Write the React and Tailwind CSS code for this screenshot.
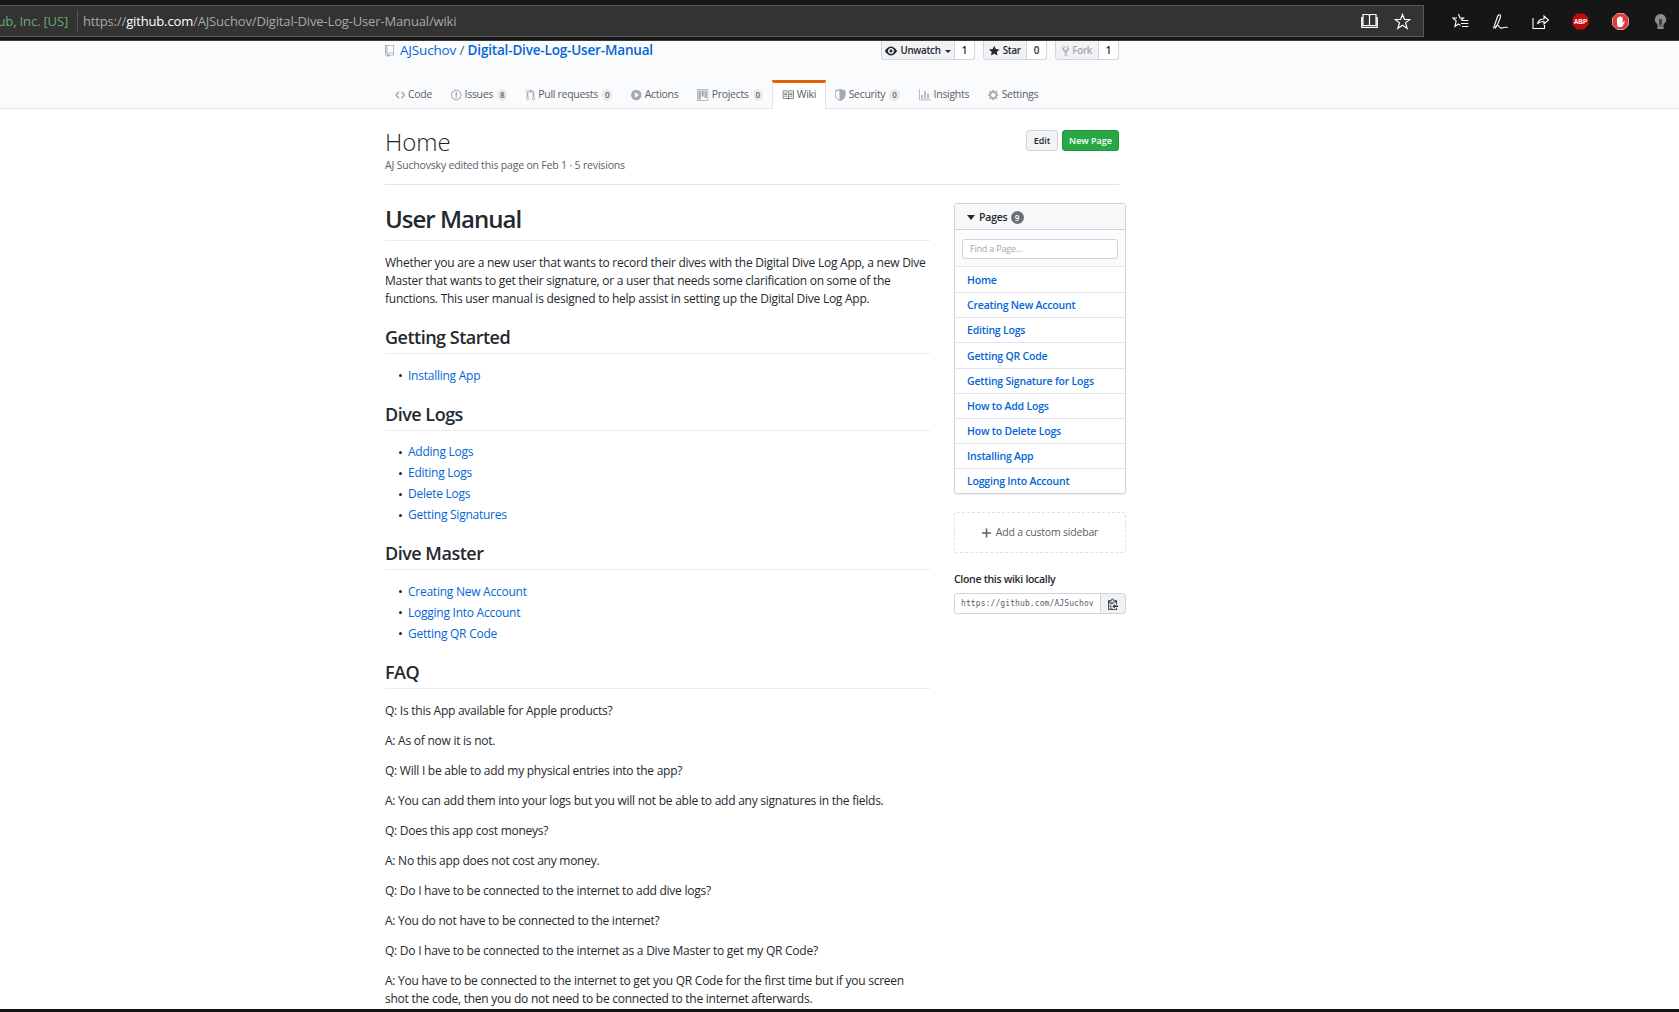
import React from "react";

const OCTICONS = {
  code: { w: 14, d: "M9.5 3L8 4.5 11.5 8 8 11.5 9.5 13 14 8 9.5 3zm-5 0L0 8l4.5 5L6 11.5 2.5 8 6 4.5 4.5 3z" },
  issue: { w: 14, d: "M7 2.3c3.14 0 5.7 2.56 5.7 5.7s-2.56 5.7-5.7 5.7A5.71 5.71 0 0 1 1.3 8c0-3.14 2.56-5.7 5.7-5.7zM7 1C3.14 1 0 4.14 0 8s3.14 7 7 7 7-3.14 7-7-3.14-7-7-7zm1 3H6v5h2V4zm0 6H6v2h2v-2z" },
  pull: { w: 12, d: "M11 11.28V5c-.03-.78-.34-1.47-.94-2.06C9.46 2.35 8.78 2.03 8 2H7V0L4 3l3 3V4h1c.27.02.48.11.69.31.21.2.3.42.31.69v6.28A1.993 1.993 0 0 0 10 15a1.993 1.993 0 0 0 1-3.72zm-1 2.92c-.66 0-1.2-.55-1.2-1.2 0-.65.55-1.2 1.2-1.2.65 0 1.2.55 1.2 1.2 0 .65-.55 1.2-1.2 1.2zM4 3c0-1.11-.89-2-2-2a1.993 1.993 0 0 0-1 3.72v6.56A1.993 1.993 0 0 0 2 15a1.993 1.993 0 0 0 1-3.72V4.72c.59-.34 1-.98 1-1.72zm-.8 10c0 .66-.55 1.2-1.2 1.2-.65 0-1.2-.55-1.2-1.2 0-.65.55-1.2 1.2-1.2.65 0 1.2.55 1.2 1.2zM2 4.2C1.34 4.2.8 3.65.8 3c0-.65.55-1.2 1.2-1.2.65 0 1.2.55 1.2 1.2 0 .65-.55 1.2-1.2 1.2z" },
  play: { w: 14, d: "M14 8A7 7 0 1 1 0 8a7 7 0 0 1 14 0zm-8.223 3.482l4.599-3.066a.5.5 0 0 0 0-.832L5.777 4.518A.5.5 0 0 0 5 4.934v6.132a.5.5 0 0 0 .777.416z" },
  project: { w: 15, d: "M10 12h3V2h-3v10zm-4-2h3V2H6v8zm-4 4h3V2H2v12zm-1 1h13V1H1v14zM14 0H1a1 1 0 0 0-1 1v14a1 1 0 0 0 1 1h13a1 1 0 0 0 1-1V1a1 1 0 0 0-1-1z" },
  book: { w: 16, d: "M3 5h4v1H3V5zm0 3h4V7H3v1zm0 2h4V9H3v1zm11-5h-4v1h4V5zm0 2h-4v1h4V7zm0 2h-4v1h4V9zm2-6v9c0 .55-.45 1-1 1H9.5l-1 1-1-1H2c-.55 0-1-.45-1-1V3c0-.55.45-1 1-1h5.5l1 1 1-1H15c.55 0 1 .45 1 1zm-8 .5L7.5 3H2v9h6V3.5zm7-.5H9.5l-.5.5V12h6V3z" },
  shield: { w: 14, d: "M7 0L0 2v6.02C0 12.69 5.31 16 7 16c1.69 0 7-3.31 7-7.98V2L7 0zm-1 2L1 3.4v4.6c0 3.4 3 5.7 5 6.6V2z" },
  graph: { w: 16, d: "M16 14v1H0V0h1v14h15zM5 13H3V8h2v5zm4 0H7V3h2v10zm4 0h-2V6h2v7z" },
  gear: { w: 14, d: "M14 8.77v-1.6l-1.94-.64-.45-1.09.88-1.84-1.13-1.13-1.81.91-1.09-.45-.69-1.92h-1.6l-.63 1.94-1.11.45-1.84-.88-1.13 1.13.91 1.81-.45 1.09L0 7.23v1.59l1.94.64.45 1.09-.88 1.84 1.13 1.13 1.81-.91 1.09.45.69 1.92h1.59l.63-1.94 1.11-.45 1.84.88 1.13-1.13-.92-1.81.47-1.09L14 8.75v.02zM7 11c-1.66 0-3-1.34-3-3s1.34-3 3-3 3 1.34 3 3-1.34 3-3 3z" },
  repo: { w: 12, d: "M4 9H3V8h1v1zm0-3H3v1h1V6zm0-2H3v1h1V4zm0-2H3v1h1V2zm8-1v12c0 .55-.45 1-1 1H6v2l-1.5-1.5L3 16v-2H1c-.55 0-1-.45-1-1V1c0-.55.45-1 1-1h10c.55 0 1 .45 1 1zm-1 10H1v2h2v-1h3v1h5v-2zm0-10H2v9h9V1z" },
  eye: { w: 16, d: "M8.06 2C3 2 0 8 0 8s3 6 8.06 6C13 14 16 8 16 8s-3-6-7.94-6zM8 12c-2.2 0-4-1.78-4-4 0-2.2 1.8-4 4-4 2.22 0 4 1.8 4 4 0 2.22-1.78 4-4 4zm2-4c0 1.11-.89 2-2 2-1.11 0-2-.89-2-2 0-1.11.89-2 2-2 1.11 0 2 .89 2 2z" },
  star: { w: 14, d: "M14 6l-4.9-.64L7 1 4.9 5.36 0 6l3.6 3.26L2.67 14 7 11.67 11.33 14l-.93-4.74L14 6z" },
  fork: { w: 10, d: "M8 1a1.993 1.993 0 0 0-1 3.72V6L5 8 3 6V4.72A1.993 1.993 0 0 0 2 1a1.993 1.993 0 0 0-1 3.72V6.5l3 3v1.78A1.993 1.993 0 0 0 5 15a1.993 1.993 0 0 0 1-3.72V9.5l3-3V4.72A1.993 1.993 0 0 0 8 1zM2 4.2C1.34 4.2.8 3.65.8 3c0-.65.55-1.2 1.2-1.2.65 0 1.2.55 1.2 1.2 0 .65-.55 1.2-1.2 1.2zm3 10c-.66 0-1.2-.55-1.2-1.2 0-.65.55-1.2 1.2-1.2.65 0 1.2.55 1.2 1.2 0 .65-.55 1.2-1.2 1.2zm3-10c-.66 0-1.2-.55-1.2-1.2 0-.65.55-1.2 1.2-1.2.65 0 1.2.55 1.2 1.2 0 .65-.55 1.2-1.2 1.2z" },
  clippy: { w: 14, d: "M2 13h4v1H2v-1zm5-6H2v1h5V7zm2 3V8l-3 3 3 3v-2h5v-2H9zM4.5 9H2v1h2.5V9zM2 12h2.5v-1H2v1zm9 1h1v2c-.02.28-.11.52-.3.7-.19.18-.42.28-.7.3H1c-.55 0-1-.45-1-1V4c0-.55.45-1 1-1h3c0-1.11.89-2 2-2 1.11 0 2 .89 2 2h3c.55 0 1 .45 1 1v5h-1V6H1v9h10v-2zM2 5h8c0-.55-.45-1-1-1H8c-.55 0-1-.45-1-1s-.45-1-1-1-1 .45-1 1-.45 1-1 1H3c-.55 0-1 .45-1 1z" },
  plus: { w: 12, d: "M12 9H7v5H5V9H0V7h5V2h2v5h5v2z" },
};

function Octicon({ name, size = 12, className = "" }) {
  const icon = OCTICONS[name];
  return (
    <svg
      viewBox={`0 0 ${icon.w} 16`}
      height={size}
      width={(size * icon.w) / 16}
      fill="currentColor"
      className={`shrink-0 ${className}`}
    >
      <path fillRule="evenodd" d={icon.d} />
    </svg>
  );
}

const TABS = [
  { label: "Code", icon: "code" },
  { label: "Issues", icon: "issue", count: 8 },
  { label: "Pull requests", icon: "pull", count: 0 },
  { label: "Actions", icon: "play" },
  { label: "Projects", icon: "project", count: 0 },
  { label: "Wiki", icon: "book", active: true },
  { label: "Security", icon: "shield", count: 0 },
  { label: "Insights", icon: "graph" },
  { label: "Settings", icon: "gear" },
];

const PAGES = [
  "Home",
  "Creating New Account",
  "Editing Logs",
  "Getting QR Code",
  "Getting Signature for Logs",
  "How to Add Logs",
  "How to Delete Logs",
  "Installing App",
  "Logging Into Account",
];

const FAQ = [
  "Q: Is this App available for Apple products?",
  "A: As of now it is not.",
  "Q: Will I be able to add my physical entries into the app?",
  "A: You can add them into your logs but you will not be able to add any signatures in the fields.",
  "Q: Does this app cost moneys?",
  "A: No this app does not cost any money.",
  "Q: Do I have to be connected to the internet to add dive logs?",
  "A: You do not have to be connected to the internet?",
  "Q: Do I have to be connected to the internet as a Dive Master to get my QR Code?",
  "A: You have to be connected to the internet to get you QR Code for the first time but if you screen shot the code, then you do not need to be connected to the internet afterwards.",
];

function BrowserBar() {
  return (
    <div className="h-[41px] shrink-0 bg-[#161616] border-b border-[#3a3a3a] pt-[5px] flex">
      <div className="w-[1424px] h-[32px] bg-[#333333] border-y border-r border-[#5a5a5a] flex items-center text-[13px] tracking-[-0.15px]">
        <div className="w-[77px] shrink-0 flex justify-end overflow-hidden pr-[9px] pt-[2px] whitespace-nowrap text-[#6cab6c]">
          GitHub, Inc. [US]
        </div>
        <div className="w-px h-[22px] bg-[#555555]" />
        <div className="pl-[5px] pt-[2px] text-[#a8a8a8] whitespace-nowrap">
          https://<span className="text-white">github.com</span>/AJSuchov/Digital-Dive-Log-User-Manual/wiki
        </div>
        <div className="ml-auto flex items-center gap-[16px] pr-[12px] text-white">
          <svg width="17" height="16" viewBox="0 0 17 16" fill="none" stroke="currentColor" strokeWidth="1.2">
            <path d="M2 1.500h5.500l1 1 1-1H15v11H2zM8.500 2.500v10M.7 4v10.300h15.600V4" />
          </svg>
          <svg width="17" height="17" viewBox="0 0 17 17" fill="none" stroke="currentColor" strokeWidth="1.2">
            <path d="M8.500 1.500l2 5h5.300l-4.300 3.400 1.600 5.500-4.600-3.200-4.600 3.200 1.600-5.500L1.200 6.500h5.300z" />
          </svg>
        </div>
      </div>
      <div className="flex-1 flex items-center gap-[23px] pl-[28px] pb-[2px] text-white">
        <svg width="17" height="17" viewBox="0 0 17 17" fill="none" stroke="currentColor" strokeWidth="1.1">
          <path d="M6.500 1l1.500 4h3.500l-2.800 2.300M5 5H.7l3.500 3-1.300 5.500 3.600-2.500 2 1.400" />
          <path d="M10 7.500h6.300M9 10.500h7.300M10 13.500h6.300" />
        </svg>
        <svg width="17" height="17" viewBox="0 0 17 17" fill="none" stroke="currentColor" strokeWidth="1.1">
          <path d="M1.500 15.500l4-12C6 2 8 1 8.500 2.500c.5 1-.8 3.500-1.800 6C6 10.500 4.500 13.500 3.500 15M3 15.500c1-3 2.500-4 3.500-2.500.8 1.300 1.500 2.500 3.300 2 1.700-.5 3-1.200 6-.5" />
        </svg>
        <svg width="17" height="17" viewBox="0 0 17 17" fill="none" stroke="currentColor" strokeWidth="1.1">
          <path d="M1 5v10.500h11.500v-3.500M5.500 11c.5-3 3-5 6.500-5V3l4.500 4-4.500 4V8.500C9.500 8.500 7 9 5.500 11z" />
        </svg>
        <svg width="17" height="17" viewBox="0 0 17 17">
          <path d="M5 .5h7L16.500 5v7L12 16.500H5L.5 12V5z" fill="#c40b0b" />
          <text x="8.500" y="11" textAnchor="middle" fontSize="6.500" fontWeight="700" fontFamily="Liberation Sans, sans-serif" fill="#ffffff">ABP</text>
        </svg>
        <svg width="17" height="17" viewBox="0 0 17 17">
          <path d="M5 .5h7L16.500 5v7L12 16.500H5L.5 12V5z" fill="#e23b3b" stroke="#f5b5b5" strokeWidth=".8" />
          <path d="M5 8V5.500c0-1 1.300-1 1.300 0V4.300c0-1 1.400-1 1.400 0V4c0-1 1.500-1 1.500 0v.8c0-1 1.400-1 1.400 0V10l1-1.300c.6-.8 1.600 0 1 .8L10 14H7c-1.500 0-2-1.500-2-3z" fill="#ffffff" />
        </svg>
        <svg width="13" height="17" viewBox="0 0 14 17" fill="#8a8a8a" className="ml-[2px]">
          <path d="M7 .5a6 6 0 0 0-3.500 10.900V13h7v-1.600A6 6 0 0 0 7 .5z" />
          <rect x="3.500" y="13.500" width="7" height="3" rx="1" />
          <rect x="5.500" y="6" width="3" height="6" fill="#3a3a3a" />
        </svg>
      </div>
    </div>
  );
}

function SocialButton({ icon, label, count, caret, muted, width }) {
  return (
    <div className="flex h-[19px] text-[9.750px] font-semibold tracking-[-0.25px]">
      <div className={`${width} h-full pt-[2px] flex items-center justify-center gap-[3px] bg-[#f0f2f5] border border-t-0 border-[#d3d5d8] rounded-bl-[3px] ${muted ? "text-[#a3a7ab]" : "text-[#24292e]"}`}>
        <Octicon name={icon} size={12} />
        {label}
        {caret && <span className="ml-[1px] border-x-[3px] border-x-transparent border-t-[3px] border-t-[#24292e]" />}
      </div>
      <div className="h-full pt-[2px] flex items-center justify-center bg-white border border-l-0 border-t-0 border-[#d3d5d8] rounded-br-[3px] w-[20px] text-[#24292e]">
        {count}
      </div>
    </div>
  );
}

function Tab({ tab }) {
  const base = "h-[29px] flex items-center gap-[3px] px-[8.500px] border-x text-[#586069] -mb-px";
  return (
    <div
      className={
        tab.active
          ? `${base} bg-white border-[#e1e4e8] border-t-[3px] border-t-[#e36209] text-[#24292e] pb-[3px]`
          : `${base} border-transparent`
      }
    >
      <Octicon name={tab.icon} size={12} className={tab.active ? "text-[#586069]" : "text-[#a3aab1]"} />
      <span>{tab.label}</span>
      {tab.count !== undefined && (
        <span className="ml-[1px] px-[3px] h-[12px] flex items-center rounded-full bg-[#e9ebed] text-[8px] font-semibold">
          {tab.count}
        </span>
      )}
    </div>
  );
}

function H2({ children, className = "mb-[12.500px]" }) {
  return (
    <h2 className={`mt-[18px] pb-[5px] border-b border-[#eaecef] text-[18px] leading-[22px] font-semibold tracking-[-0.5px] text-[#24292e] ${className}`}>
      {children}
    </h2>
  );
}

function LinkList({ items }) {
  return (
    <ul className="pl-[14px] mb-[12px]">
      {items.map((item, i) => (
        <li key={item} className={`flex items-center gap-[6px] ${i > 0 ? "mt-[3px]" : ""}`}>
          <span className="w-[3px] h-[3px] rounded-full bg-[#24292e]" />
          <a className="text-[#0366d6]">{item}</a>
        </li>
      ))}
    </ul>
  );
}

function Sidebar() {
  return (
    <aside className="w-[172px] shrink-0 -mr-[7px] tracking-[-0.2px]">
      <div className="border border-[#d1d5da] rounded-[3px] shadow-[0_1px_1px_rgba(0,0,0,0.08)] bg-white">
        <div className="h-[26px] pt-[2px] bg-[#f6f8fa] border-b border-[#d1d5da] flex items-center pl-[12px] text-[10.500px] font-semibold text-[#24292e]">
          <span className="mr-[4px] border-x-[4px] border-x-transparent border-t-[5px] border-t-[#24292e]" />
          Pages
          <span className="ml-[3px] w-[13px] h-[13px] rounded-full bg-[#6a737d] text-white text-[8px] flex items-center justify-center">9</span>
        </div>
        <div className="h-[37px] pt-px bg-[#fafbfc] border-b border-[#e1e4e8] flex items-center px-[7px]">
          <div className="w-full h-[20px] bg-white border border-[#d1d5da] rounded-[3px] flex items-center pl-[7px] text-[9px] text-[#a3a7ab]">
            Find a Page…
          </div>
        </div>
        {PAGES.map((page, i) => (
          <div
            key={page}
            className={`h-[25.150px] pt-[2px] flex items-center pl-[12px] text-[10.500px] font-semibold text-[#0366d6] ${i > 0 ? "border-t border-[#e1e4e8]" : ""}`}
          >
            {page}
          </div>
        ))}
      </div>
      <div className="mt-[18px] h-[41px] border border-dashed border-[#dfe2e5] rounded-[3px] flex items-center justify-center gap-[5px] text-[10.500px] text-[#586069]">
        <Octicon name="plus" size={12} className="text-[#586069]" />
        Add a custom sidebar
      </div>
      <div className="mt-[19px] text-[10.500px] font-semibold tracking-[-0.3px] leading-[14px] text-[#24292e]">Clone this wiki locally</div>
      <div className="mt-[7px] flex h-[21px]">
        <input
          readOnly
          value="https://github.com/AJSuchov/Digital-Dive-Log-User-Manual.wiki.git"
          className="flex-1 min-w-0 border border-[#d1d5da] rounded-l-[3px] px-[6px] font-['DejaVu_Sans_Mono',monospace] text-[8px] tracking-[0.1px] text-[#586069]"
        />
        <div className="w-[26px] -ml-px bg-[#f0f2f5] border border-[#d1d5da] rounded-r-[3px] flex items-center justify-center text-[#24292e]">
          <Octicon name="clippy" size={12} />
        </div>
      </div>
    </aside>
  );
}

export default function App() {
  return (
    <div className="h-[1012px] overflow-hidden flex flex-col bg-white font-['Open_Sans',sans-serif] text-[#24292e]">
      <BrowserBar />
      <div className="flex-1 min-h-0 overflow-hidden">
        <div className="h-[68px] bg-[#fafbfc] border-b border-[#e1e4e8]">
          <div className="w-[734px] ml-[385px] h-full flex flex-col">
            <div className="flex h-[19px]">
              <div className="flex items-center gap-[6px] text-[13.500px] tracking-[-0.17px] text-[#0366d6]">
                <Octicon name="repo" size={12} className="text-[#a3aab1]" />
                <span>
                  AJSuchov <span className="text-[#586069]">/</span> <span className="font-semibold">Digital-Dive-Log-User-Manual</span>
                </span>
              </div>
              <div className="ml-auto flex gap-[8px]">
                <SocialButton icon="eye" label="Unwatch" count="1" caret width="w-[74px]" />
                <SocialButton icon="star" label="Star" count="0" width="w-[44px]" />
                <SocialButton icon="fork" label="Fork" count="1" muted width="w-[44px]" />
              </div>
            </div>
            <div className="mt-auto flex text-[10.500px] tracking-[-0.3px]">
              {TABS.map((tab) => (
                <Tab key={tab.label} tab={tab} />
              ))}
            </div>
          </div>
        </div>

        <div className="w-[734px] ml-[385px]">
          <div className="h-[76px] border-b border-[#e1e4e8] pt-[18px] flex justify-between">
            <div>
              <div className="text-[24px] leading-[30px] font-light text-[#1b1f23]">Home</div>
              <div className="mt-[1px] text-[10.500px] leading-[14px] tracking-[-0.18px] text-[#586069]">
                AJ Suchovsky edited this page on Feb 1 · 5 revisions
              </div>
            </div>
            <div className="flex gap-[4px] text-[9px] font-semibold">
              <div className="w-[32px] h-[21px] mt-[3px] flex items-center justify-center bg-[#f3f4f6] border border-[#d1d5da] rounded-[3px]">Edit</div>
              <div className="w-[57px] h-[21px] mt-[3px] flex items-center justify-center bg-[#28a745] border border-[#23923d] rounded-[3px] text-white">New Page</div>
            </div>
          </div>

          <div className="mt-[18px] flex gap-[24px]">
            <main className="w-[545px] shrink-0 text-[12px] leading-[18px] tracking-[-0.25px]">
              <h1 className="mb-[13px] pt-px pb-[6px] border-b border-[#eaecef] text-[24px] leading-[30px] font-semibold tracking-[-1px]">User Manual</h1>
              <p className="mb-[12px]">
                Whether you are a new user that wants to record their dives with the Digital Dive Log App, a new Dive Master that wants to get their signature, or a user that needs some clarification on some of the functions. This user manual is designed to help assist in setting up the Digital Dive Log App.
              </p>
              <H2>Getting Started</H2>
              <LinkList items={["Installing App"]} />
              <H2>Dive Logs</H2>
              <LinkList items={["Adding Logs", "Editing Logs", "Delete Logs", "Getting Signatures"]} />
              <H2>Dive Master</H2>
              <LinkList items={["Creating New Account", "Logging Into Account", "Getting QR Code"]} />
              <H2 className="mb-[13px]">FAQ</H2>
              {FAQ.map((line) => (
                <p key={line} className="mb-[12px]">{line}</p>
              ))}
            </main>
            <Sidebar />
          </div>
        </div>
      </div>
      <div className="h-[3px] shrink-0 bg-[#111111]" />
    </div>
  );
}
